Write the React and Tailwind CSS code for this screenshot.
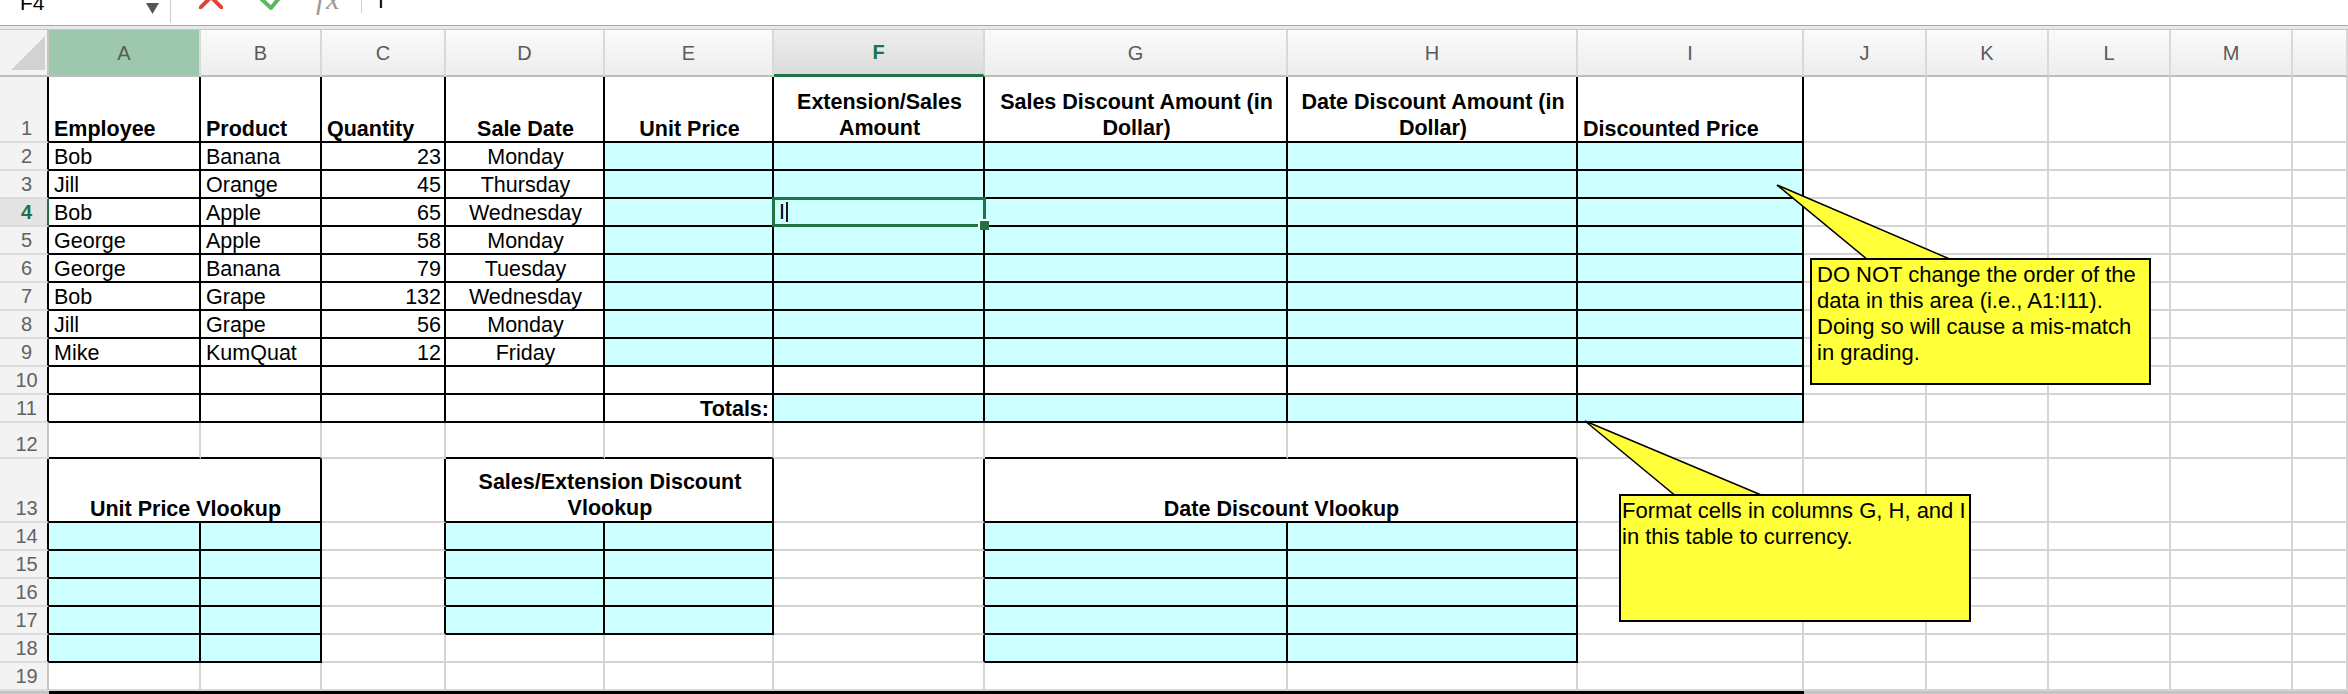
import React from 'react'
import clsx from 'clsx'

const LETTERS = ['', 'A', 'B', 'C', 'D', 'E', 'F', 'G', 'H', 'I', 'J', 'K', 'L', 'M', '']

const SALES = [
  ['Bob', 'Banana', '23', 'Monday'],
  ['Jill', 'Orange', '45', 'Thursday'],
  ['Bob', 'Apple', '65', 'Wednesday'],
  ['George', 'Apple', '58', 'Monday'],
  ['George', 'Banana', '79', 'Tuesday'],
  ['Bob', 'Grape', '132', 'Wednesday'],
  ['Jill', 'Grape', '56', 'Monday'],
  ['Mike', 'KumQuat', '12', 'Friday'],
]

const HEAD = {
  1: { lines: ['Employee'], align: 'left', bold: true },
  2: { lines: ['Product'], align: 'left', bold: true },
  3: { lines: ['Quantity'], align: 'left', bold: true },
  4: { lines: ['Sale Date'], align: 'center', bold: true },
  5: { lines: ['Unit Price'], align: 'center', bold: true },
  6: { lines: ['Extension/Sales', 'Amount'], align: 'center', bold: true },
  7: { lines: ['Sales Discount Amount (in', 'Dollar)'], align: 'center', bold: true },
  8: { lines: ['Date Discount Amount (in', 'Dollar)'], align: 'center', bold: true },
  9: { lines: ['Discounted Price'], align: 'left', bold: true },
}

// cells with a black border (A1:I11 and the three lookup tables)
function boxed(r, c) {
  if (r >= 1 && r <= 11 && c >= 1 && c <= 9) return true
  if (r >= 13 && r <= 18 && (c === 1 || c === 2)) return true
  if (r >= 13 && r <= 17 && (c === 4 || c === 5)) return true
  if (r >= 13 && r <= 18 && (c === 7 || c === 8)) return true
  return false
}

function cyan(r, c) {
  if (r >= 2 && r <= 9 && c >= 5 && c <= 9) return true
  if (r === 11 && c >= 6 && c <= 9) return true
  if (r >= 14 && r <= 18 && (c === 1 || c === 2)) return true
  if (r >= 14 && r <= 17 && (c === 4 || c === 5)) return true
  if (r >= 14 && r <= 18 && (c === 7 || c === 8)) return true
  return false
}

function content(r, c) {
  if (r === 1) return HEAD[c] || null
  if (r >= 2 && r <= 9 && c >= 1 && c <= 4) {
    const align = c === 3 ? 'right' : c === 4 ? 'center' : 'left'
    return { lines: [SALES[r - 2][c - 1]], align }
  }
  if (r === 11 && c === 5) return { lines: ['Totals:'], align: 'right', bold: true }
  if (r === 13 && c === 1) return { lines: ['Unit Price Vlookup'], align: 'center', bold: true }
  if (r === 13 && c === 4) return { lines: ['Sales/Extension Discount', 'Vlookup'], align: 'center', bold: true }
  if (r === 13 && c === 7) return { lines: ['Date Discount Vlookup'], align: 'center', bold: true }
  return null
}

function Cell({ r, c, span }) {
  const last = span ? c + 1 : c
  const rightBlack = boxed(r, last) || boxed(r, last + 1)
  const bottomBlack = boxed(r, c) || boxed(r + 1, c)
  const info = content(r, c)
  const selected = r === 4 && c === 6

  return (
    <div
      className={clsx(
        'relative flex items-end border-r-2 border-b-2 pl-[5px] pr-[3px] text-[21.5px] text-black',
        span && 'col-span-2',
        rightBlack ? 'border-r-black' : 'border-r-[#d4d4d4]',
        bottomBlack ? 'border-b-black' : 'border-b-[#d4d4d4]',
        cyan(r, c) ? 'bg-[#ccffff]' : 'bg-white',
        info && info.align === 'center' && 'justify-center',
        info && info.align === 'right' && 'justify-end',
      )}
    >
      {info && (
        <div
          className={clsx(
            'whitespace-nowrap',
            info.bold && 'font-bold',
            info.lines.length > 1 ? 'text-center leading-[26px]' : 'leading-[24px]',
          )}
        >
          {info.lines.map((l, i) => (
            <div key={i}>{l}</div>
          ))}
        </div>
      )}
      {selected && (
        <>
          <div className="flex items-center leading-[24px] mb-[1px]">
            <span>I</span>
            <span className="ml-[1px] h-[20px] w-[2px] bg-[#2a1010]" />
          </div>
          {/* active cell frame + fill handle */}
          <div className="absolute -left-[2px] -top-[2px] -right-[3px] -bottom-[2px] z-10 border-[3px] border-[#217346]" />
          <div className="absolute -right-[6px] -bottom-[5px] z-20 h-[11px] w-[11px] border-t-2 border-l-2 border-white bg-[#217346]" />
        </>
      )}
    </div>
  )
}

function RowHeader({ r }) {
  const active = r === 4
  return (
    <div
      className={clsx(
        'flex items-end justify-center pl-[6px] border-r-2 border-b-2 border-b-[#dcdcdc] text-[20px] leading-[24px]',
        active ? 'border-r-[#217346] bg-[#e4e4e4] font-bold text-[#217346]' : boxed(r, 1) ? 'border-r-black bg-[#f3f3f3] text-[#626262]' : 'border-r-[#c6c6c6] bg-[#f3f3f3] text-[#626262]',
      )}
    >
      <span className="mb-[1px]">{r}</span>
    </div>
  )
}

function ColHeader({ c }) {
  return (
    <div
      className={clsx(
        'flex items-center justify-center border-r-2 border-r-[#d9d9d9] text-[20px]',
        c === 6
          ? 'border-b-[3px] border-b-[#217346] bg-linear-to-b from-[#eeeeee] to-[#dcdcdc] font-bold text-[#217346]'
          : 'border-b-2 border-b-[#bdbdbd] text-[#5a5a5a]',
        c === 1 && 'bg-[#9dc8ad]',
        c !== 1 && c !== 6 && 'bg-linear-to-b from-[#fbfbfb] to-[#ededed]',
      )}
    >
      {LETTERS[c]}
    </div>
  )
}

function Toolbar() {
  return (
    <div className="flex h-[25px] overflow-hidden bg-white">
      <div className="flex h-[23px] w-[171px] shrink-0 justify-between border-r border-[#c9c9c9]">
        <span className="ml-[20px] -mt-[9px] text-[21px] leading-[24px] text-black">F4</span>
        <svg className="mr-[11px] mt-[3px]" width="13" height="11" viewBox="0 0 13 11">
          <polygon points="0,0 13,0 6.5,11" fill="#555555" />
        </svg>
      </div>
      <svg className="ml-[28px] -mt-[15px] shrink-0" width="24" height="24" viewBox="0 0 24 24">
        <path d="M1 1 L23 23 M23 1 L1 23" stroke="#e3413b" strokeWidth="4" strokeLinecap="round" fill="none" />
      </svg>
      <svg className="ml-[31px] -mt-[16px] shrink-0" width="38" height="26" viewBox="0 0 38 26">
        <polyline points="2,10 17,24 35,2" stroke="#5cb85c" strokeWidth="4" strokeLinecap="round" strokeLinejoin="round" fill="none" />
      </svg>
      <span className="ml-[24px] -mt-[18px] w-[30px] shrink-0 font-['Liberation_Serif',serif] text-[30px] italic leading-[34px] tracking-[2px] text-[#9b9b9b]">
        fx
      </span>
      <div className="ml-[15px] h-[13px] w-px shrink-0 bg-[#cfcfcf]" />
      <span className="ml-[16px] -mt-[11px] text-[21px] leading-[24px] text-black">I</span>
    </div>
  )
}

function Callout({ tip, box, lines, padLeft }) {
  return (
    <>
      <svg className="absolute z-30" style={{ left: tip.left, top: tip.top }} width={tip.w} height={tip.h}>
        <polygon points={tip.points} fill="#ffff3a" stroke="#000000" strokeWidth="1.5" />
      </svg>
      <div
        className={clsx(
          'absolute z-30 border-2 border-black bg-[#ffff3a] pt-[2px] text-[22px] leading-[26px] text-black whitespace-nowrap',
          padLeft,
        )}
        style={{ left: box.left, top: box.top, width: box.w, height: box.h }}
      >
        {lines.map((l, i) => (
          <div key={i}>{l}</div>
        ))}
      </div>
    </>
  )
}

export default function App() {
  const cells = []
  cells.push(
    <div key="corner" className="border-r-2 border-r-[#c6c6c6] border-b-2 border-b-[#bdbdbd] bg-[#f3f3f3]">
      <svg width="47" height="45" viewBox="0 0 47 45">
        <polygon points="11,40 45,40 45,6" fill="#d2d2d2" />
      </svg>
    </div>,
  )
  for (let c = 1; c <= 14; c++) cells.push(<ColHeader key={`c${c}`} c={c} />)
  for (let r = 1; r <= 19; r++) {
    cells.push(<RowHeader key={`h${r}`} r={r} />)
    for (let c = 1; c <= 14; c++) {
      if (r === 13 && (c === 2 || c === 5 || c === 8)) continue
      const span = r === 13 && (c === 1 || c === 4 || c === 7)
      cells.push(<Cell key={`${r}-${c}`} r={r} c={c} span={span} />)
    }
  }
  // bottom edge of the sheet
  cells.push(<div key="b0" className="bg-[#c4c4c4]" />)
  cells.push(<div key="b1" className="col-span-9 bg-black" />)
  cells.push(<div key="b2" className="col-span-5 bg-[#c4c4c4]" />)

  return (
    <div className="relative h-[694px] w-[2348px] overflow-hidden bg-white font-['Liberation_Sans',Arial,sans-serif]">
      <Toolbar />
      <div className="h-[5px] border-t border-t-[#a8a8a8] border-b border-b-[#c4c4c4] bg-[#e9e9e9]" />
      <div className="grid grid-cols-[49px_152px_121px_124px_159px_169px_211px_303px_290px_226px_123px_122px_122px_122px_55px] grid-rows-[47px_66px_repeat(10,28px)_36px_64px_repeat(6,28px)_3px]">
        {cells}
      </div>

      <Callout
        tip={{ left: 1770, top: 180, w: 190, h: 82, points: '7,5 98,80 182,80' }}
        box={{ left: 1810, top: 258, w: 341, h: 127 }}
        padLeft="pl-[5px]"
        lines={[
          'DO NOT change the order of the',
          'data in this area (i.e., A1:I11).',
          'Doing so will cause a mis-match',
          'in grading.',
        ]}
      />
      <Callout
        tip={{ left: 1580, top: 416, w: 190, h: 82, points: '5,5 97,81 186,81' }}
        box={{ left: 1619, top: 494, w: 352, h: 128 }}
        padLeft="pl-[1px]"
        lines={['Format cells in columns G, H, and I', 'in this table to currency.']}
      />
    </div>
  )
}
